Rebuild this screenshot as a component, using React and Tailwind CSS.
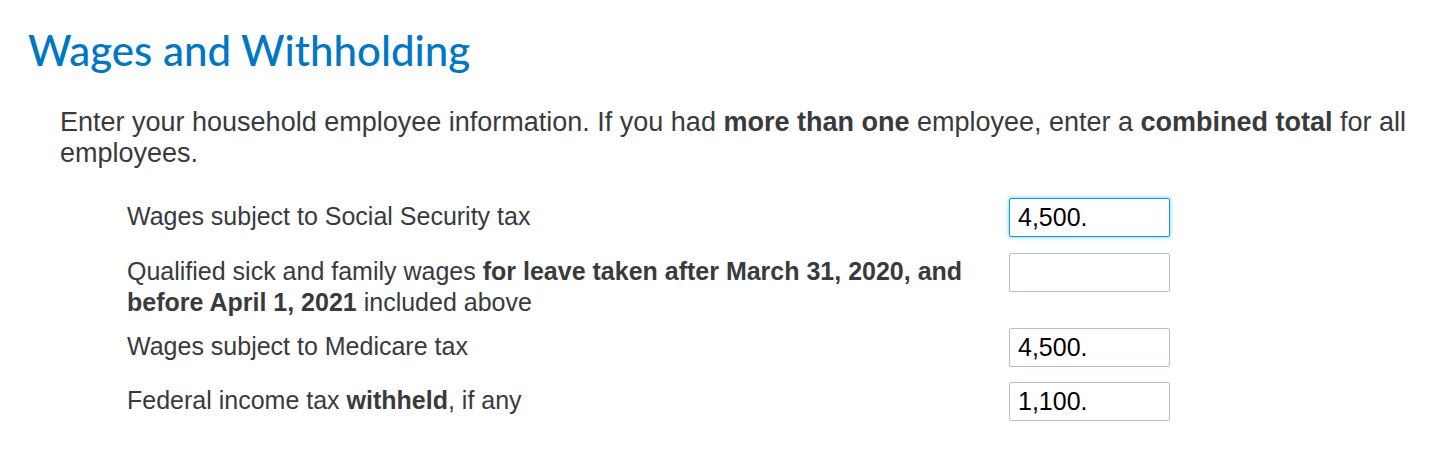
import React from 'react';

const rows = [
  { label: <>Wages subject to Social Security tax</>, value: '4,500.', focused: true, mt: 'mt-0' },
  {
    label: (
      <>
        Qualified sick and family wages <b>for leave taken after March 31, 2020, and before April 1, 2021</b> included above
      </>
    ),
    value: '',
    mt: 'mt-[16px]',
  },
  { label: <>Wages subject to Medicare tax</>, value: '4,500.', mt: 'mt-[10px]' },
  { label: <>Federal income tax <b>withheld</b>, if any</>, value: '1,100.', mt: 'mt-[15px]' },
];

function App() {
  return (
    <div className="min-h-screen bg-white pl-[28px] pt-[24px]" style={{ fontFamily: '"Liberation Sans", Arial, sans-serif' }}>
      <h1
        className="text-[42px] leading-[52px] font-medium text-[#0077c5]"
        style={{ fontFamily: 'Lato, "Noto Sans", sans-serif' }}
      >
        Wages and Withholding
      </h1>

      <p className="mt-[31px] ml-[32px] mr-[20px] text-[27px] leading-[31px] text-[#393a3d]">
        Enter your household employee information. If you had <b>more than one</b> employee, enter a <b>combined total</b> for all employees.
      </p>

      <div className="mt-[29px] ml-[99px] flex flex-col">
        {rows.map((r, i) => (
          <div key={i} className={'flex items-start ' + r.mt}>
            <div className="w-[882px] pr-[30px] text-[25px] leading-[31px] text-[#393a3d] pt-[3px]">{r.label}</div>
            <input
              readOnly
              value={r.value}
              className={
                'w-[161px] h-[39px] px-[8px] rounded-[2px] border text-[25px] text-black outline-none ' +
                (r.focused ? 'border-[#0d9ddb] shadow-[0_0_4px_#6cc4ee]' : 'border-[#babec5]')
              }
              style={{ fontFamily: '"Liberation Sans", Arial, sans-serif' }}
            />
          </div>
        ))}
      </div>
    </div>
  );
}

export default App;
